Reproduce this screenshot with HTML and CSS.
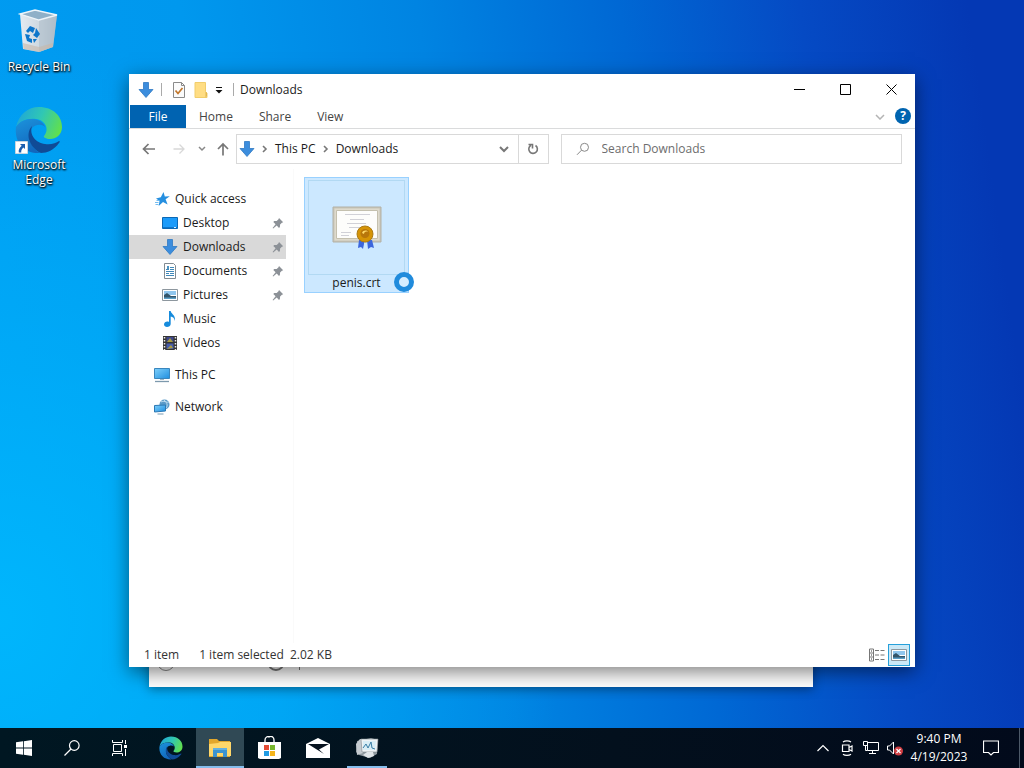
FILE: index.html
```html
<!DOCTYPE html>
<html lang="en">
  <head>
    <meta charset="utf-8">
    <title>Downloads</title>
    <link rel="stylesheet" href="styles.css">
  </head>
  <body>
    <svg class="defs" aria-hidden="true">
      <defs>
        <linearGradient id="edge-top" x1="0" y1="0.3" x2="1" y2="0.6">
          <stop offset="0" stop-color="#1fa6d8" />
          <stop offset="0.5" stop-color="#30c7b4" />
          <stop offset="1" stop-color="#62e04c" />
        </linearGradient>
        <linearGradient id="edge-left" x1="0" y1="0" x2="0.4" y2="1">
          <stop offset="0" stop-color="#1c93dc" />
          <stop offset="1" stop-color="#1267bd" />
        </linearGradient>
        <linearGradient id="bin" x1="0" y1="0" x2="1" y2="0">
          <stop offset="0" stop-color="#e4ebf1" />
          <stop offset="0.6" stop-color="#cbd6df" />
          <stop offset="1" stop-color="#a3b2c0" />
        </linearGradient>
        <linearGradient id="screen" x1="0" y1="0" x2="1" y2="1">
          <stop offset="0" stop-color="#7fd0fb" />
          <stop offset="1" stop-color="#1f8fe0" />
        </linearGradient>
      </defs>
      <symbol id="down" viewBox="0 0 16 16">
        <path d="M5.5 0.5h5v7h4.5L8 15.5 1 7.5h4.5z" fill="#3c8ddd" stroke="#2e79c3" stroke-width="0.8" />
      </symbol>
      <symbol id="pin" viewBox="0 0 12 12">
        <path d="M7 1l4.2 4.2-1.3.5-1.8 1.8-.2 2.5-.9.9L4.7 8.5 1.2 11.6l-.6-.5L3.6 7.3 1.3 5l.9-.9 2.5-.1 1.8-1.8z" fill="#8c9197" />
      </symbol>
      <symbol id="edge" viewBox="0 0 48 48">
        <path d="M1 21C4 8 13 1 24 1c14 0 23 9 23 20 0 8-6 12-12 12-4 0-7-2-6-3 6-7 1-16-8-17C12 12 5 15 1 21z" fill="url(#edge-top)" />
        <path d="M1 21c4-6 10-8 16-8 7 0 12 4 13 8-3-3-9-3-13 1-7 8-1 20 8 25C10 48-1 37 1 21z" fill="url(#edge-left)" />
        <path d="M17 20c-3 9 4 17 13 18 6 1 11-1 14-3 1 0 1 1 0 2-5 7-12 10-18 10-10-4-17-18-9-27z" fill="#104b96" />
      </symbol>
      <symbol id="picture" viewBox="0 0 16 16">
        <path d="M.5 2.5h15v11H.5z" fill="#fff" stroke="#8d979e" />
        <path d="M2 4h12v4H2z" fill="#8fc6ee" />
        <path d="M2 8l3-2 4 3 5 0v3H2z" fill="#33556a" />
        <path d="M2 10.5h12V12H2z" fill="#5b9fc7" />
      </symbol>
    </svg>

    <main class="desktop">
      <div class="shortcuts">
        <button class="shortcut">
          <svg class="shortcut-icon" viewBox="0 0 48 48">
            <path d="M5 6L20 2l22 5-4 32-14 5-16-3z" fill="url(#bin)" />
            <path d="M24 12l18-5-4 32-14 5z" fill="#b4c2cd" opacity="0.7" />
            <path d="M5 6L20 2l22 5-18 5z" fill="#8fb0c8" stroke="#eef5fa" stroke-width="1.3" />
            <path d="M8 35l16 4 14-4-.4 4L24 44 8.500 41z" fill="#c8b7a8" opacity="0.6" />
            <path d="M11 23l4-5 5 2-2 5-3-2-2 2zM21 20l4 6-3 4-4-3 2-2zM10 26l5 1-1 3 3 1v4l-5-2zM18 31l4 0-3 4z" fill="#0c76cb" />
          </svg>
          <span>Recycle Bin</span>
        </button>
        <button class="shortcut">
          <svg class="shortcut-icon" viewBox="0 0 48 48">
            <use href="#edge" />
            <path d="M.5 35.500h12v12H.5z" fill="#fff" stroke="#c8d5df" />
            <path d="M5 38h5v5L8.400 41.400C6.500 43 6 44.500 6.300 46.500H3.800C3.300 43.500 4.500 41.500 6.700 39.700z" fill="#1d5fae" />
          </svg>
          <span>Microsoft Edge</span>
        </button>
      </div>

      <section class="back-window">
        <span class="ring"></span>
        <span class="ring dark"></span>
        <span class="stem"></span>
      </section>

      <section class="window">
        <header class="titlebar">
          <svg class="icon" viewBox="0 0 16 16"><use href="#down" /></svg>
          <span class="divider"></span>
          <button class="quick" aria-label="Properties">
            <svg class="icon" viewBox="0 0 16 16">
              <path d="M2.500 .5h8l3 3v12h-11z" fill="#fbfbfb" stroke="#8a8a8a" />
              <path d="M10.500 .5v3h3" fill="none" stroke="#8a8a8a" />
              <path d="M4.500 8.500l2.500 3L11.500 6" fill="none" stroke="#c2762b" stroke-width="1.700" />
            </svg>
          </button>
          <button class="quick" aria-label="New folder">
            <svg class="icon" viewBox="0 0 16 16">
              <path d="M2 .5h10.500v9l1.500 1.500v4.500H2z" fill="#ffdd83" stroke="#f1cd6b" />
              <path d="M12.500 9.500V15.500L14 14v-3z" fill="#e2b850" />
            </svg>
          </button>
          <button class="customize" aria-label="Customize">
            <svg viewBox="0 0 8 8"><path d="M1 1.500h6" stroke="#111" /><path d="M.5 4h7L4 7.500z" fill="#111" /></svg>
          </button>
          <span class="divider"></span>
          <h1 class="title">Downloads</h1>
          <div class="controls">
            <button aria-label="Minimize"><svg viewBox="0 0 11 11"><path d="M0 5.500h11" /></svg></button>
            <button aria-label="Maximize"><svg viewBox="0 0 11 11"><path d="M.5 .5h10v10H.5z" /></svg></button>
            <button aria-label="Close"><svg viewBox="0 0 11 11"><path d="M.5 .5l10 10M10.500 .5l-10 10" /></svg></button>
          </div>
        </header>

        <nav class="tabs">
          <button class="tab file">File</button>
          <button class="tab">Home</button>
          <button class="tab">Share</button>
          <button class="tab">View</button>
          <button class="expand" aria-label="Expand ribbon">
            <svg viewBox="0 0 10 6"><path d="M1 1l4 4 4-4" fill="none" stroke="#b4b4b4" stroke-width="1.500" /></svg>
          </button>
          <button class="help" aria-label="Help">?</button>
        </nav>

        <div class="toolbar">
          <div class="history">
            <button class="wide" aria-label="Back"><svg class="icon" viewBox="0 0 16 16"><path d="M14 8H3M7.500 3L2.500 8l5 5" fill="none" stroke="#777" stroke-width="1.700" /></svg></button>
            <button class="wide" aria-label="Forward"><svg class="icon" viewBox="0 0 16 16"><path d="M2.500 8h10M8.500 3.500L13 8l-4.500 4.500" fill="none" stroke="#d8d8d8" stroke-width="1.300" /></svg></button>
            <button class="recent" aria-label="Recent"><svg viewBox="0 0 8 6"><path d="M1 1l3 3 3-3" fill="none" stroke="#888" stroke-width="1.500" /></svg></button>
            <button class="up" aria-label="Up"><svg class="icon" viewBox="0 0 16 16"><path d="M8 14.500V3.500M3 8l5-5 5 5" fill="none" stroke="#777" stroke-width="1.700" /></svg></button>
          </div>
          <div class="address">
            <svg class="icon" viewBox="0 0 16 16"><use href="#down" /></svg>
            <svg class="crumb-arrow" viewBox="0 0 6 8"><path d="M1 1l3 3-3 3" /></svg>
            <button class="crumb">This PC</button>
            <svg class="crumb-arrow" viewBox="0 0 6 8"><path d="M1 1l3 3-3 3" /></svg>
            <button class="crumb">Downloads</button>
            <button class="previous" aria-label="Previous locations">
              <svg viewBox="0 0 10 7"><path d="M1 1l4 4 4-4" fill="none" stroke="#777" stroke-width="2" /></svg>
            </button>
            <button class="refresh" aria-label="Refresh">
              <svg viewBox="0 0 12 12"><path d="M8.500 2.500A4.300 4.300 0 1 1 4 2.300M1.500 1.500h4v4" fill="none" stroke="#777" stroke-width="1.600" /></svg>
            </button>
          </div>
          <label class="search">
            <svg viewBox="0 0 14 14"><circle cx="8.500" cy="5.300" r="4" fill="none" stroke="#888" /><path d="M5.500 8.200L1 12.800" stroke="#888" /></svg>
            <input type="text" placeholder="Search Downloads" aria-label="Search Downloads">
          </label>
        </div>

        <div class="content">
          <ul class="tree">
            <li class="root">
              <svg class="icon" viewBox="0 0 16 16"><path d="M9.500 1l1.300 4.500 5-.3-4.200 3 2 5.300L9 11l-4.300 4 .8-5L2 7.500l4.800-1.200z" fill="#258fe0" /><path d="M1 11.500h3.500M2.500 9.500h3M1.500 13.500h3" stroke="#75bdf0" /></svg>
              Quick access
            </li>
            <li>
              <svg class="icon" viewBox="0 0 16 16"><path d="M.5 2.500h15v11H.5z" fill="#1b9bfa" stroke="#0b68b5" /><path d="M1 12.500h14" stroke="#0d75ca" /><path d="M12 12.500h2" stroke="#d9efff" /></svg>
              Desktop
              <svg class="pin" viewBox="0 0 12 12"><use href="#pin" /></svg>
            </li>
            <li class="selected">
              <svg class="icon" viewBox="0 0 16 16"><use href="#down" /></svg>
              Downloads
              <svg class="pin" viewBox="0 0 12 12"><use href="#pin" /></svg>
            </li>
            <li>
              <svg class="icon" viewBox="0 0 16 16"><path d="M2.500 .5h9l2 2v13h-11z" fill="#fff" stroke="#818b92" /><path d="M4 6.500h3M8 4.500h4M8 6.500h4M4 8.500h8M4 10.500h3M8 10.500h4M4 12.500h8" stroke="#3f88b9" /><path d="M5 3h2v3H5z" fill="#4c94c2" /></svg>
              Documents
              <svg class="pin" viewBox="0 0 12 12"><use href="#pin" /></svg>
            </li>
            <li>
              <svg class="icon" viewBox="0 0 16 16"><use href="#picture" /></svg>
              Pictures
              <svg class="pin" viewBox="0 0 12 12"><use href="#pin" /></svg>
            </li>
            <li>
              <svg class="icon" viewBox="0 0 16 16"><path d="M7 0h1.700c.3 3 5.800 4.500 3.800 10.200.2-3-1.500-4.200-3.800-4.700V13c0 3.500-6.700 4-6.700.5 0-2.500 3-3.500 5-2.500z" fill="#168bdc" /></svg>
              Music
            </li>
            <li>
              <svg class="icon" viewBox="0 0 16 16"><path d="M1 1h14v14H1z" fill="#343434" /><path d="M2.500 2v13M13.500 2v13" stroke="#eee" stroke-width="1.500" stroke-dasharray="1.500 1.500" /><path d="M4.500 2h7v5h-7z" fill="#3f488a" /><path d="M4.500 8.500h7V14h-7z" fill="#465cac" /><path d="M5 7l3-4 3 4M5 14l4-4 2 3" fill="#a89c42" /></svg>
              Videos
            </li>
            <li class="root spaced">
              <svg class="icon" viewBox="0 0 16 16"><path d="M.5 1.500h15v10H.5z" fill="url(#screen)" stroke="#3a86bd" /><path d="M1 14.500h14" stroke="#7d99ad" stroke-width="1.300" /><path d="M6 12.500h4" stroke="#9db7c9" /></svg>
              This PC
            </li>
            <li class="root spaced">
              <svg class="icon" viewBox="0 0 16 16"><circle cx="10.500" cy="5.500" r="5" fill="#5a9ac8" /><path d="M7 3c3-2 5 1 8 0M10 1c4 3 4 7 1 9" fill="none" stroke="#bddcf0" /><path d="M.5 6.500l11-.5v6l-11 1z" fill="url(#screen)" stroke="#2b78b4" /><path d="M3.500 15h6" stroke="#799bb3" /></svg>
              Network
            </li>
          </ul>
          <div class="files">
            <button class="tile">
              <span class="thumb">
                <svg viewBox="0 0 50 46">
                  <path d="M1 2h48v35H1z" fill="#c9c6b8" stroke="#b3b1a6" />
                  <path d="M2.500 3.500h45v32h-45z" fill="#dedacd" />
                  <path d="M4.500 5.500h41v28h-41z" fill="#fdfdfb" stroke="#c4c0ae" />
                  <path d="M13 9.500h25M18 14.500h14M15 18.500h19M17 22.500h14M9 27.500h10M9 30.500h8" stroke="#d1d1d7" />
                  <path d="M27 35h5v4l-1 5-2-2-3 1zM35 35h5l2 8-3-1-3 2z" fill="#3c66dc" />
                  <circle cx="33" cy="29" r="8" fill="#d69405" stroke="#ab7b14" />
                  <circle cx="33" cy="28.500" r="4.500" fill="#b8760a" />
                  <path d="M30 28c1-3 5-3 6-1-2-1-4 0-4 2z" fill="#ffd968" />
                </svg>
              </span>
              <span class="name">penis.crt</span>
              <span class="busy"></span>
            </button>
          </div>
        </div>

        <footer class="status">
          <span>1 item</span>
          <span class="selection">1 item selected&nbsp; 2.02 KB</span>
          <div class="views">
            <button aria-label="Details">
              <svg class="icon" viewBox="0 0 16 16"><path d="M.5 2v12h4V2zM.5 6h4M.5 10h4" fill="none" stroke="#777" /><path d="M2 4h1M2 8h1M2 12h1" stroke="#333" /><path d="M6 3.500h4M11.500 3.500h4M6 8h4M11.500 8h4M6 12.500h4M11.500 12.500h4" stroke="#777" /></svg>
            </button>
            <button class="active" aria-label="Large icons">
              <svg class="icon" viewBox="0 0 16 16"><use href="#picture" /></svg>
            </button>
          </div>
        </footer>
      </section>
    </main>

    <footer class="taskbar">
      <div class="system">
        <button aria-label="Start">
          <svg class="icon" viewBox="0 0 16 16"><path d="M0 2.300L7 1.300V7.600H0zM7.800 1.200L16 0V7.600H7.800zM0 8.400H7V14.700L0 13.700zM7.800 8.400H16V16L7.800 14.800z" fill="#fff" /></svg>
        </button>
        <button aria-label="Search">
          <svg class="icon" viewBox="0 0 16 16"><circle cx="10.300" cy="5.500" r="4.800" fill="none" stroke="#fff" stroke-width="1.200" /><path d="M7 9L.5 15.500" stroke="#fff" stroke-width="1.300" /></svg>
        </button>
        <button aria-label="Task view">
          <svg class="icon" viewBox="0 0 16 16"><path d="M.5 0v2.500h10V0M.5 16v-2.500h10V16M1.500 4.500h8v7h-8zM13.500 0v4M13.500 9v7" fill="none" stroke="#fff" /><path d="M12 5h3v3h-3z" fill="#fff" /></svg>
        </button>
      </div>
      <div class="apps">
        <button aria-label="Microsoft Edge"><svg viewBox="0 0 48 48"><use href="#edge" /></svg></button>
        <button class="current" aria-label="File Explorer">
          <svg viewBox="0 0 24 24"><path d="M1 3h8l2 2h11v16H1z" fill="#e3a72c" /><path d="M1 8l9-1 2-1h11v14H1z" fill="#ffd76a" /><path d="M5 12h14v9h-4v-4H9v4H5z" fill="#3c94d0" /><path d="M5 12h14v2H5z" fill="#64b0df" /></svg>
        </button>
        <button aria-label="Store">
          <svg viewBox="0 0 24 24"><path d="M8 7V4c0-3 3-4 4-3 3-2 5 1 5 3v3" fill="none" stroke="#fff" stroke-width="1.300" /><path d="M1 6h23v16l-2 1H3l-2-1z" fill="#fff" /><path d="M7 9h5v5H7z" fill="#e44b35" /><path d="M13 9h5v5h-5z" fill="#78b72d" /><path d="M7 15h5v5H7z" fill="#209be3" /><path d="M13 15h5v5h-5z" fill="#f5b51c" /></svg>
        </button>
        <button aria-label="Mail">
          <svg viewBox="0 0 24 24"><path d="M0 8L12 2l12 6v14H0z" fill="#fff" /><path d="M2 8h21l-10 5.500 5 4.500z" fill="#07131f" /></svg>
        </button>
        <button class="running" aria-label="Monitor">
          <svg viewBox="0 0 24 24"><path d="M2 5l14-3 7 2-1 14-7 4-11-3-3-3z" fill="#8f999f" /><path d="M1 8l4-5 3 0v14l-6 2z" fill="#c5cbd0" /><path d="M6 3h17l-1 13H7z" fill="#eef2f4" stroke="#7d868c" stroke-width="0.600" /><path d="M8 5h13l-1 9H8z" fill="#d8edf5" /><path d="M8 12l3-4 2 4 3-6 1 6 3 1" fill="none" stroke="#397da5" /><path d="M12 16h6l1 4-6 2-5-3z" fill="#dfe4e7" /></svg>
        </button>
      </div>
      <div class="tray">
        <button aria-label="Show hidden icons"><svg class="icon" viewBox="0 0 16 16"><path d="M2.500 11L8 5.500l5.500 5.500" fill="none" stroke="#fff" stroke-width="1.200" /></svg></button>
        <button aria-label="Meet now"><svg class="icon" viewBox="0 0 16 16"><path d="M3.500 5h6.500v6.500H3.500zM10 7.500l3-1.500v5l-3-1.500M4 2c2-1.500 6-1.500 8 0M4 14.200c2 1.500 6 1.500 8 0" fill="none" stroke="#fff" stroke-width="1.200" /></svg></button>
        <button aria-label="Network"><svg class="icon" viewBox="0 0 16 16"><path d="M4.500 2.500h11v8h-11zM9.500 10.500v3M6 13.500h7M.5 1.500h4v4h-4zM2.500 5.500v5h2" fill="none" stroke="#fff" /></svg></button>
        <button aria-label="Volume muted"><svg class="icon" viewBox="0 0 16 16"><path d="M.5 6h2L6.500 2v12l-4-4h-2z" fill="none" stroke="#fff" /><circle cx="11.500" cy="11" r="4.500" fill="#cf3d42" /><path d="M9.500 9l4 4M13.500 9l-4 4" stroke="#fff" stroke-width="1.200" /></svg></button>
        <button class="clock"><span>9:40 PM</span><span>4/19/2023</span></button>
        <button class="notes" aria-label="Notifications"><svg class="icon" viewBox="0 0 16 16"><path d="M.5 1h15v11.500h-5L8 15l-2.500-2.500h-5z" fill="none" stroke="#fff" stroke-width="1.200" /></svg></button>
        <button class="show-desktop" aria-label="Show desktop"></button>
      </div>
    </footer>
  </body>
</html>
```
FILE: styles.css
```css
* {
  box-sizing: border-box;
}
body {
  margin: 0;
  height: 100vh;
  display: flex;
  flex-direction: column;
  overflow: hidden;
  font-family: "Open Sans", "Noto Sans", sans-serif;
  font-size: 12px;
  line-height: 16px;
  color: #1b1b1b;
}
button {
  display: flex;
  align-items: center;
  justify-content: center;
  padding: 0;
  border: 0;
  background: none;
  font: inherit;
  color: inherit;
}
svg {
  flex: none;
}
.defs {
  position: absolute;
  width: 0;
  height: 0;
}
.icon {
  width: 16px;
  height: 16px;
}

/* Desktop */
.desktop {
  flex: 1;
  position: relative;
  background:
    radial-gradient(ellipse 55% 80% at 0% 85%, rgba(0, 188, 255, 0.8), rgba(0, 180, 250, 0)),
    linear-gradient(82deg, #009cf2 0%, #0098ee 25%, #0084e2 46%, #0068d4 64%, #054ac4 80%, #0438b4 95%);
}
.shortcuts {
  display: flex;
  flex-direction: column;
  gap: 32px;
  width: 78px;
  padding-top: 8px;
}
.shortcut {
  flex-direction: column;
  gap: 3px;
  padding: 0 4px;
  line-height: 15px;
  color: #fff;
  text-shadow: 1px 1px 2px #000, 0 1px 2px #000;
}
.shortcut-icon {
  width: 48px;
  height: 48px;
}

/* Window behind the explorer */
.back-window {
  position: absolute;
  left: 149px;
  right: 211px;
  bottom: 41px;
  height: 60px;
  display: flex;
  align-items: flex-start;
  padding: 26px 8px;
  background: #fff;
  box-shadow: 0 2px 10px rgba(0, 0, 0, 0.4);
}
.ring {
  width: 18px;
  height: 18px;
  margin-right: 92px;
  border: 1px solid #888;
  border-radius: 50%;
}
.ring.dark {
  margin-right: 14px;
  border: 2px solid #777;
}
.stem {
  width: 1px;
  height: 17px;
  background: #777;
}

/* Explorer window */
.window {
  position: absolute;
  top: 74px;
  right: 109px;
  bottom: 61px;
  left: 129px;
  display: flex;
  flex-direction: column;
  background: #fff;
  box-shadow: 0 5px 18px rgba(0, 0, 0, 0.5);
}
.titlebar {
  display: flex;
  align-items: center;
  height: 31px;
  padding-left: 9px;
}
.divider {
  width: 1px;
  height: 13px;
  margin: 0 6px 0 7px;
  background: #aaa;
}
.quick {
  width: 22px;
}
.customize {
  width: 14px;
}
.customize svg {
  width: 8px;
  height: 8px;
}
.title {
  flex: 1;
  margin: 0;
  font-size: 12px;
  font-weight: 400;
}
.controls {
  display: flex;
  height: 100%;
  padding-right: 1px;
}
.controls button {
  width: 46px;
}
.controls svg {
  width: 11px;
  height: 11px;
  fill: none;
  stroke: #000;
}
.tabs {
  display: flex;
  height: 24px;
  padding: 0 4px 0 1px;
  border-bottom: 1px solid #dadbdc;
  color: #444;
}
.tab {
  padding: 0 13px;
}
.tab.file {
  width: 56px;
  background: #0063b1;
  color: #fff;
}
.expand {
  width: 22px;
  margin-left: auto;
}
.expand svg {
  width: 10px;
  height: 6px;
}
.help {
  width: 16px;
  height: 16px;
  margin: 3px 0 0 4px;
  border-radius: 50%;
  background: #0064b0;
  color: #fff;
  font-weight: 700;
}
.toolbar {
  display: flex;
  height: 40px;
  padding: 5px 13px 5px 5px;
}
.history {
  display: flex;
}
.wide {
  width: 30px;
}
.recent {
  width: 16px;
}
.recent svg {
  width: 8px;
  height: 6px;
}
.up {
  width: 26px;
}
.address {
  flex: 309;
  display: flex;
  align-items: center;
  padding-left: 2px;
  border: 1px solid #d9d9d9;
}
.crumb-arrow {
  width: 6px;
  height: 8px;
  margin: 0 7px;
  fill: none;
  stroke: #777;
  stroke-width: 1.6;
}
.previous {
  width: 28px;
  margin-left: auto;
}
.previous svg {
  width: 10px;
  height: 7px;
}
.refresh {
  width: 30px;
  height: 100%;
  border-left: 1px solid #d9d9d9;
}
.refresh svg {
  width: 12px;
  height: 12px;
}
.search {
  flex: 326;
  display: flex;
  align-items: center;
  gap: 12px;
  margin-left: 12px;
  padding-left: 14px;
  border: 1px solid #d9d9d9;
}
.search svg {
  width: 14px;
  height: 14px;
}
.search input {
  flex: 1;
  min-width: 0;
  padding: 0;
  border: 0;
  outline: 0;
  font: inherit;
}
.search input::placeholder {
  color: #6d6d6d;
}

.content {
  flex: 1;
  display: flex;
}
.tree {
  width: 165px;
  margin: 0;
  padding: 18px 7px 0 0;
  border-right: 1px solid #fafafa;
  list-style: none;
}
.tree li {
  display: flex;
  align-items: center;
  gap: 5px;
  height: 24px;
  padding: 0 2px 0 33px;
}
.tree .root {
  padding-left: 25px;
}
.tree .spaced {
  margin-top: 8px;
}
.tree .selected {
  background: #d9d9d9;
}
.pin {
  width: 12px;
  height: 12px;
  margin-left: auto;
}
.files {
  flex: 1;
  padding: 8px 10px;
}
.tile {
  position: relative;
  flex-direction: column;
  justify-content: flex-start;
  width: 105px;
  height: 116px;
  padding-top: 2px;
  border: 1px solid #99d1ff;
  background: #cce8ff;
}
.thumb {
  display: flex;
  align-items: center;
  justify-content: center;
  width: 97px;
  height: 95px;
  border: 1px solid #b2d9f3;
}
.thumb svg {
  width: 50px;
  height: 46px;
}
.busy {
  position: absolute;
  right: -6px;
  bottom: 0;
  width: 20px;
  height: 20px;
  border: 5px solid #208bdc;
  border-radius: 50%;
  background: #d5edff;
}
.status {
  display: flex;
  align-items: center;
  height: 24px;
  padding: 0 5px 0 15px;
  color: #333;
}
.selection {
  margin-left: 20px;
}
.views {
  display: flex;
  margin-left: auto;
}
.views button {
  width: 22px;
  height: 22px;
}
.views .active {
  border: 1px solid #26a0da;
  background: #cbe8f6;
}

/* Taskbar */
.taskbar {
  display: flex;
  height: 40px;
  background: linear-gradient(90deg, #001722, #03101d 60%, #020a1b);
  color: #fff;
}
.system,
.apps,
.tray {
  display: flex;
}
.system button,
.apps button {
  width: 48px;
}
.apps {
  gap: 1px;
  margin-left: 3px;
}
.apps svg {
  width: 24px;
  height: 24px;
}
.apps .current {
  background: #304955;
  box-shadow: inset 0 -2px #85bdec;
}
.apps .running {
  background: linear-gradient(#85bdec, #85bdec) center bottom / 40px 2px no-repeat;
}
.tray {
  margin-left: auto;
}
.tray button {
  width: 24px;
}
.tray .clock {
  flex-direction: column;
  width: 64px;
  line-height: 18px;
}
.tray .notes {
  width: 40px;
}
.tray .show-desktop {
  width: 5px;
  margin-left: 8px;
  border-left: 1px solid #4d5968;
}
```
